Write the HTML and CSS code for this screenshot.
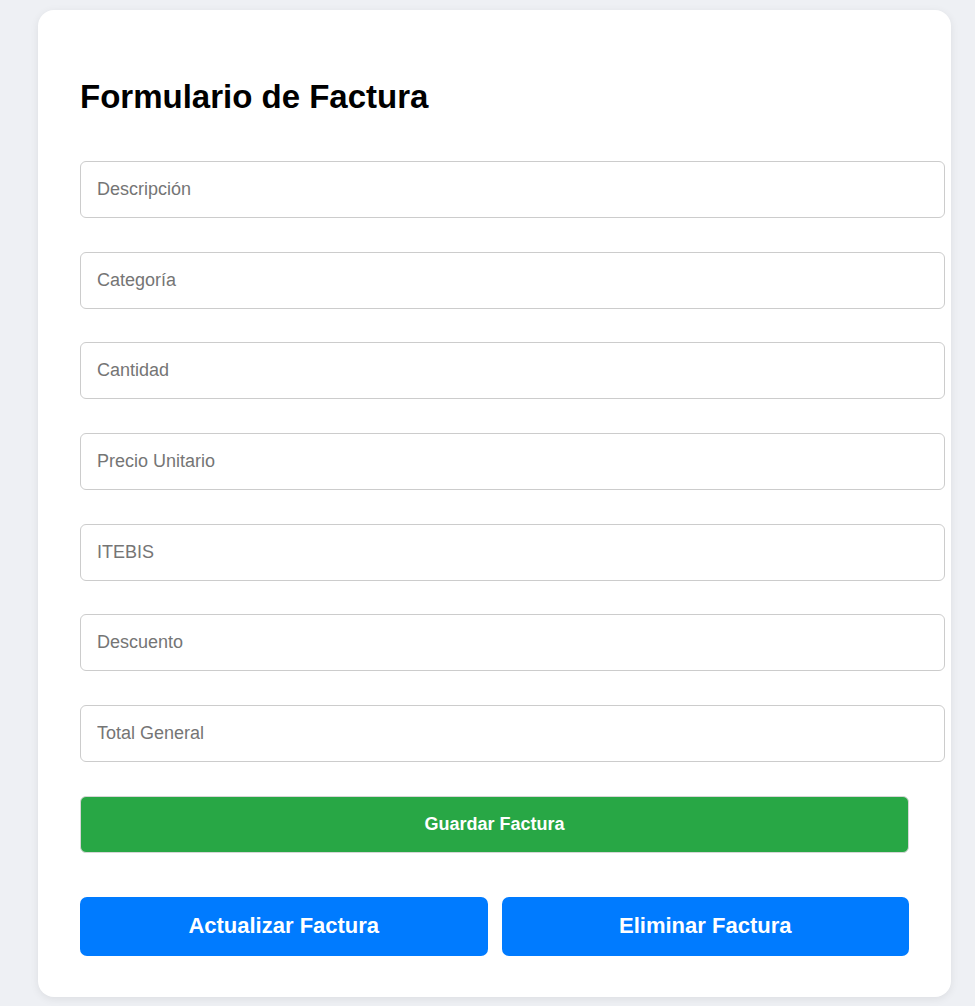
FILE: index.html
```html
<!DOCTYPE html>
<html lang="es">
<head>
<meta charset="utf-8">
<title>Formulario de Factura</title>
<link rel="stylesheet" href="styles.css">
</head>
<body>
<div class="card">
  <h2 class="title">Formulario de Factura</h2>
  <form class="form">
    <input class="field" type="text" placeholder="Descripción">
    <input class="field" type="text" placeholder="Categoría">
    <input class="field" type="text" placeholder="Cantidad">
    <input class="field" type="text" placeholder="Precio Unitario">
    <input class="field" type="text" placeholder="ITEBIS">
    <input class="field" type="text" placeholder="Descuento">
    <input class="field" type="text" placeholder="Total General">
    <button class="btn-save" type="button">Guardar Factura</button>
  </form>
  <div class="actions">
    <button class="btn-blue" type="button">Actualizar Factura</button>
    <button class="btn-blue" type="button">Eliminar Factura</button>
  </div>
</div>
</body>
</html>
```
FILE: styles.css
```css
html, body {
  margin: 0;
  padding: 0;
}
body {
  background: #eef0f4;
  font-family: "Liberation Sans", Arial, sans-serif;
  padding: 10px 24px 9px 38px;
  min-height: 1006px;
  box-sizing: border-box;
}
.card {
  width: 913px;
  box-sizing: border-box;
  background: #ffffff;
  border-radius: 16px;
  box-shadow: 0 2px 8px rgba(0, 0, 0, 0.08);
  padding: 42px 42px 41px 42px;
  height: 987px;
}
.title {
  margin: 26px 0 0 0;
  font-size: 33px;
  font-weight: bold;
  color: #000;
  line-height: 38px;
}
.form {
  display: flex;
  flex-direction: column;
  margin-top: 45px;
}
.field {
  width: 100%;
  box-sizing: content-box;
  height: 21px;
  padding: 17px 18px 17px 16px;
  margin: 0 0 33.7px 0;
  border: 1px solid #cccccc;
  border-radius: 6px;
  font-family: "Liberation Sans", Arial, sans-serif;
  font-size: 18px;
  color: #333;
  background: #fff;
  outline: none;
}
.field::placeholder {
  color: #757575;
}
.field:last-of-type {
  margin-bottom: 33.8px;
}
.btn-save {
  height: 57px;
  border: 1px solid #d6d6d6;
  border-radius: 6px;
  background: #28a745;
  color: #ffffff;
  font-family: "Liberation Sans", Arial, sans-serif;
  font-size: 18px;
  font-weight: bold;
  cursor: pointer;
}
.actions {
  display: flex;
  gap: 14px;
  margin-top: 44px;
}
.btn-blue {
  flex: 1;
  height: 59px;
  border: none;
  border-radius: 7px;
  background: #007bff;
  color: #ffffff;
  font-family: "Liberation Sans", Arial, sans-serif;
  font-size: 22px;
  font-weight: bold;
  cursor: pointer;
}
```
